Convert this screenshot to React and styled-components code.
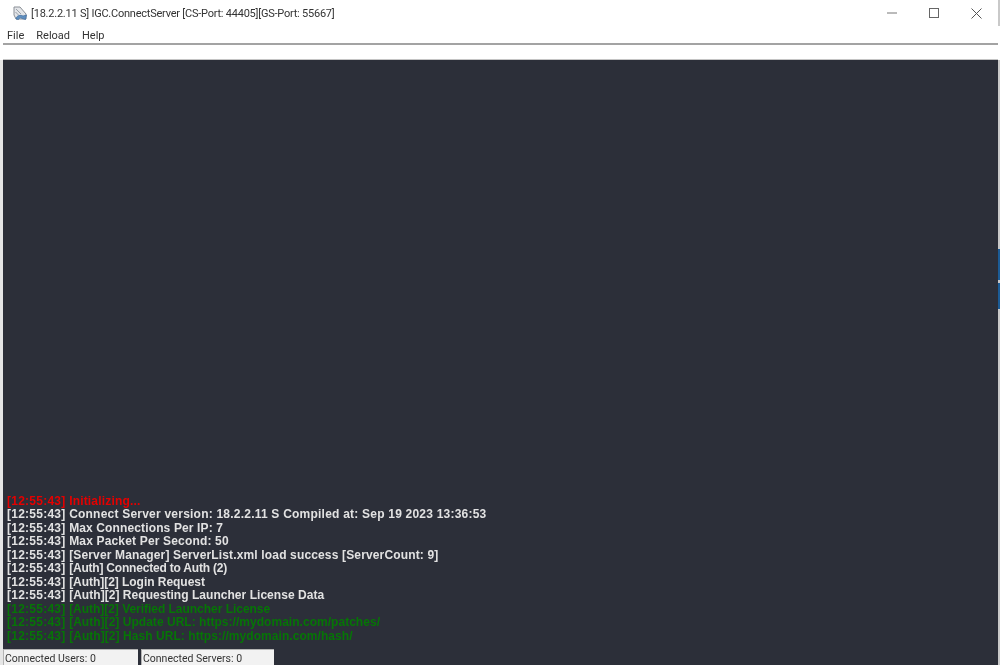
import React from 'react';
import styled, { createGlobalStyle } from 'styled-components';

const GlobalStyle = createGlobalStyle`
  html, body, #root {
    margin: 0;
    height: 100%;
  }
  body {
    overflow: hidden;
    background: #fff;
    font-family: "Liberation Sans", Arial, sans-serif;
  }
`;

const Page = styled.div`
  display: flex;
  flex-direction: column;
  width: 1000px;
  height: 665px;
  background: #fff;
  filter: blur(0.35px);
`;

const TitleBar = styled.div`
  display: flex;
  align-items: center;
  height: 26px;
  flex-shrink: 0;
  padding-left: 13px;
  border-right: 2px solid #c9c9c9;
`;

const Title = styled.span`
  margin-left: 3px;
  font-family: Roboto, "Liberation Sans", sans-serif;
  font-size: 11px;
  letter-spacing: -0.23px;
  color: #333;
  white-space: nowrap;
`;

const WindowButtons = styled.div`
  display: flex;
  margin-left: auto;
  margin-right: 1px;
`;

const WindowButton = styled.div`
  display: flex;
  align-items: center;
  justify-content: center;
  width: 42px;
  height: 26px;
`;

const MenuBar = styled.div`
  display: flex;
  align-items: center;
  gap: 12px;
  height: 17px;
  box-sizing: border-box;
  flex-shrink: 0;
  padding: 2px 0 0 7px;
  font-family: Roboto, "Liberation Sans", sans-serif;
  font-size: 11px;
  color: #333;
`;

const InputStrip = styled.div`
  height: 14px;
  flex-shrink: 0;
  margin-left: 3px;
  margin-right: 2px;
  background: #fff;
  border-top: 2px solid #a3a3a3;
  border-bottom: 1px solid #c4c4c4;
`;

const Body = styled.div`
  display: flex;
  flex: 1;
  min-height: 0;
`;

const LeftEdge = styled.div`
  width: 3px;
  background: #e6e6e6;
`;

const RightEdge = styled.div`
  display: flex;
  flex-direction: column;
  width: 2px;
  background: #c9c9c9;
`;

const EdgeGap = styled.div`
  height: ${(p) => p.$h}px;
`;

const EdgeBlue = styled.div`
  height: ${(p) => p.$h}px;
  background: #1c5c96;
`;

const Console = styled.div`
  display: flex;
  flex-direction: column;
  flex: 1;
  background: #2c2f39;
`;

const LogArea = styled.div`
  display: flex;
  flex-direction: column;
  justify-content: flex-end;
  flex: 1;
  padding: 0 0 6px 4px;
`;

const LogLine = styled.div`
  height: 13.5px;
  line-height: 13.5px;
  font-size: 12px;
  font-weight: 700;
  letter-spacing: 0.25px;
  white-space: nowrap;
  color: ${(p) => (p.$kind === 'error' ? '#e40000' : p.$kind === 'ok' ? '#067506' : '#e2e2e2')};
`;

const Message = styled.span`
  letter-spacing: ${(p) => p.$track}px;
`;

const StatusRow = styled.div`
  display: flex;
  gap: 3px;
  height: 16px;
`;

const StatusBox = styled.div`
  display: flex;
  align-items: center;
  width: ${(p) => p.$w}px;
  padding: 1px 0 0 1px;
  box-sizing: border-box;
  background: #f2f2f2;
  border-top: 1px solid #b4b4b4;
  border-left: 1px solid #b4b4b4;
  font-family: Roboto, "Liberation Sans", sans-serif;
  font-size: 10.5px;
  color: #333;
  white-space: nowrap;
`;

const logLines = [
  { text: 'Initializing...', kind: 'error', track: 0.18 },
  { text: 'Connect Server version: 18.2.2.11 S Compiled at: Sep 19 2023 13:36:53', track: 0.22 },
  { text: 'Max Connections Per IP: 7', track: 0.13 },
  { text: 'Max Packet Per Second: 50', track: 0.17 },
  { text: '[Server Manager] ServerList.xml load success [ServerCount: 9]', track: 0.15 },
  { text: '[Auth] Connected to Auth (2)', track: -0.2 },
  { text: '[Auth][2] Login Request', track: -0.04 },
  { text: '[Auth][2] Requesting Launcher License Data', track: 0.04 },
  { text: '[Auth][2] Verified Launcher License', kind: 'ok', track: -0.03 },
  { text: '[Auth][2] Update URL: https://mydomain.com/patches/', kind: 'ok', track: 0.03 },
  { text: '[Auth][2] Hash URL: https://mydomain.com/hash/', kind: 'ok', track: 0.06 },
];

const AppIcon = () => (
  <svg width="15" height="15" viewBox="0 0 15 15" fill="none">
    <path d="M1 1 H7 L13 8 V13 H3 L1 9 Z" fill="#e3e5e8" stroke="#8b9097" strokeWidth="1" />
    <path d="M3 3 L8 8 M2.5 6 L6 9.5" stroke="#9aa0a8" strokeWidth="1" />
    <path d="M3 13 C3 9.5 8 8.5 10 10 L13.5 9 L12.5 13.5 L9 12.5 C8 11.5 6 11.5 5.5 13.5 Z" fill="#5f8fc0" stroke="#3f6c9e" strokeWidth="0.7" />
  </svg>
);

const App = () => {
  return (
    <Page>
      <GlobalStyle />
      <TitleBar>
        <AppIcon />
        <Title>[18.2.2.11 S] IGC.ConnectServer [CS-Port: 44405][GS-Port: 55667]</Title>
        <WindowButtons>
          <WindowButton>
            <svg width="10" height="10" viewBox="0 0 10 10">
              <path d="M0 5 H10" stroke="#777" strokeWidth="1" />
            </svg>
          </WindowButton>
          <WindowButton>
            <svg width="10" height="10" viewBox="0 0 10 10" fill="none">
              <rect x="0.5" y="0.5" width="9" height="9" stroke="#666" strokeWidth="1" />
            </svg>
          </WindowButton>
          <WindowButton>
            <svg width="11" height="11" viewBox="0 0 11 11">
              <path d="M0.5 0.5 L10.5 10.5 M10.5 0.5 L0.5 10.5" stroke="#555" strokeWidth="1" />
            </svg>
          </WindowButton>
        </WindowButtons>
      </TitleBar>
      <MenuBar>
        <span>File</span>
        <span>Reload</span>
        <span>Help</span>
      </MenuBar>
      <InputStrip />
      <Body>
        <LeftEdge />
        <Console>
          <LogArea>
            {logLines.map((line, i) => (
              <LogLine key={i} $kind={line.kind}>
                [12:55:43] <Message $track={line.track}>{line.text}</Message>
              </LogLine>
            ))}
          </LogArea>
          <StatusRow>
            <StatusBox $w={135}>Connected Users: 0</StatusBox>
            <StatusBox $w={133}>Connected Servers: 0</StatusBox>
          </StatusRow>
        </Console>
        <RightEdge>
          <EdgeGap $h={189} />
          <EdgeBlue $h={31} />
          <EdgeGap $h={3} />
          <EdgeBlue $h={26} />
        </RightEdge>
      </Body>
    </Page>
  );
};

export default App;
